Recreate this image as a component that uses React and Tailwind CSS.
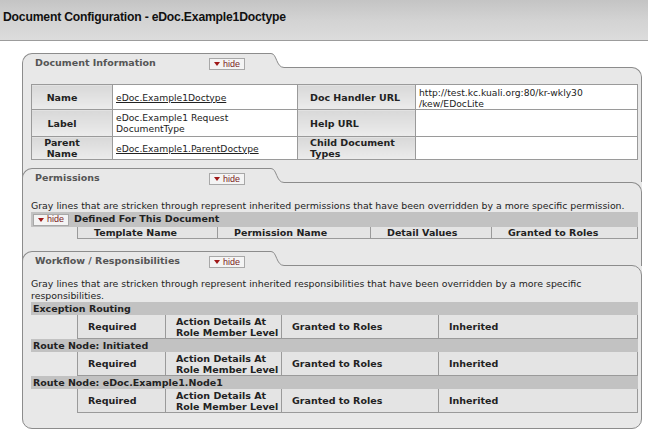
import React from 'react'

const VERDANA = "font-['DejaVu_Sans',Verdana,sans-serif]"

function HideBtn({ className = '' }) {
  return (
    <span className={`inline-flex items-center gap-[3px] h-[12px] px-[4px] border border-[#a8a8a8] bg-[#f4f4f4] text-[#7a1c1c] text-[9px] leading-none font-['Liberation_Sans',Arial,sans-serif] ${className}`}>
      <svg width="6" height="4" viewBox="0 0 6 4"><path d="M0 0H6L3 4Z" fill="#a01818" /></svg>
      hide
    </span>
  )
}

// tab with curved right edge; its bottom row covers the next box's top border
function Tab({ title, inset }) {
  return (
    <div className={`relative z-10 flex h-[15px] ${inset ? '-ml-px' : ''}`}>
      <div className="w-[246px] h-[15px] border-l border-t border-[#8c8c8c] rounded-tl-[10px] bg-[#e8e8e8] flex items-start pl-[12px]">
        <span className={`w-[174px] mt-[3px] leading-[11px] text-[9.5px] font-bold text-[#555] ${VERDANA}`}>{title}</span>
        <HideBtn className="mt-[4px]" />
      </div>
      <svg width="16" height="15" viewBox="0 0 16 15" className="block">
        <path d="M0 0H3C9 0 8 14 16 14V15H0Z" fill="#e8e8e8" />
        <path d="M0 0.5H3C9 0.5 8 14.5 16 14.5" fill="none" stroke="#8c8c8c" strokeWidth="1" />
      </svg>
    </div>
  )
}

const INFO = [
  { l1: 'Name', v1: 'eDoc.Example1Doctype', link1: true, l2: 'Doc Handler URL', v2: 'http://test.kc.kuali.org:80/kr-wkly30 /kew/EDocLite', h: 'h-[25px]' },
  { l1: 'Label', v1: 'eDoc.Example1 Request DocumentType', l2: 'Help URL', v2: '', h: 'h-[27px]' },
  { l1: 'Parent Name', v1: 'eDoc.Example1.ParentDoctype ', link1: true, l2: 'Child Document Types', v2: '', h: 'h-[20px]' },
]

const RESP = ['Exception Routing', 'Route Node: Initiated', 'Route Node: eDoc.Example1.Node1']

export default function App() {
  return (
    <div className={`w-[648px] h-[435px] bg-white overflow-hidden ${VERDANA} text-[#222]`}>
      {/* title band */}
      <div className="h-[41px] border-b border-[#9c9c9c] bg-gradient-to-b from-[#c4c4c4] via-[#d3d3d3] to-[#dcdcdc] flex items-start pl-[3px] pt-[8px]">
        <h1 className="text-[12.2px] font-bold text-[#111] font-['Liberation_Sans',Arial,sans-serif] tracking-[-0.2px]">
          Document Configuration - eDoc.Example1Doctype
        </h1>
      </div>

      <div className="ml-[22px] w-[620px] mt-[12px]">
        <Tab title="Document Information" />

        {/* Document Information */}
        <div className="-mt-px border-x border-t border-[#8c8c8c] rounded-tr-[10px] bg-[#e8e8e8] pt-[16px]">
          <table className="ml-[8px] w-[607px] border-collapse text-[9.2px]">
            <tbody>
              {INFO.map((r, i) => (
                <tr key={i} className={r.h}>
                  <th className="w-[81px] border border-[#9a9a9a] bg-gradient-to-b from-[#d8d8d8] to-[#ececec] text-[9.5px] font-bold text-center pr-[20px] leading-[11px]">{r.l1}</th>
                  <td className="w-[185px] border border-[#9a9a9a] bg-white px-[3px] leading-[11px] align-middle">
                    {r.link1 ? <span className="underline">{r.v1}</span> : <span className="block w-[130px]">{r.v1}</span>}
                  </td>
                  <th className="w-[118px] border border-[#9a9a9a] bg-gradient-to-b from-[#d8d8d8] to-[#ececec] text-[9.5px] font-bold text-left pl-[12px] leading-[11px]">{r.l2}</th>
                  <td className="border border-[#9a9a9a] bg-white px-[3px] leading-[11px] align-top pt-[2px]">
                    <span className="block w-[180px]">{r.v2}</span>
                  </td>
                </tr>
              ))}
            </tbody>
          </table>
          <div className="mt-[8px]">
            <Tab title="Permissions" inset />
          </div>
        </div>

        <div className="-mt-px bg-[#e8e8e8] rounded-b-[10px]">
          {/* Permissions */}
          <div className="border-x border-t border-[#8c8c8c] rounded-tr-[10px] bg-[#e8e8e8] pt-[17px]">
            <p className="pl-[8px] text-[9.4px] leading-[11px]">
              Gray lines that are stricken through represent inherited permissions that have been overridden by a more specific permission.
            </p>
            <div className="ml-[8px] w-[607px] mt-[1px]">
              <div className="h-[15px] bg-[#c2c2c2] flex items-center pl-[2px] gap-[5px]">
                <HideBtn />
                <span className="text-[9.5px] font-bold">Defined For This Document</span>
              </div>
              <div className="ml-[46px] flex h-[12px] border-l border-[#9a9a9a] text-[9.5px] font-bold leading-[11px]">
                {[['Template Name', 'w-[140px]'], ['Permission Name', 'w-[153px]'], ['Detail Values', 'w-[121px]'], ['Granted to Roles', 'flex-1']].map(([t, w]) => (
                  <div key={t} className={`${w} border-r border-b border-[#9a9a9a] bg-[#e4e4e4] pl-[16px]`}>{t}</div>
                ))}
              </div>
            </div>
            <div className="mt-[12px]">
              <Tab title="Workflow / Responsibilities" inset />
            </div>
          </div>

          {/* Workflow / Responsibilities */}
          <div className="-mt-px border-x border-t border-b border-[#8c8c8c] rounded-tr-[10px] rounded-b-[10px] bg-[#e8e8e8] pt-[12px] pb-[15px]">
            <p className="pl-[8px] w-[580px] text-[9.4px] leading-[12px]">
              Gray lines that are stricken through represent inherited responsibilities that have been overridden by a more specific responsibilities.
            </p>
            <div className="ml-[8px] w-[607px]">
              {RESP.map(name => (
                <div key={name}>
                  <div className="h-[13px] bg-[#c2c2c2] pl-[2px] text-[9.5px] font-bold leading-[13px]">{name}</div>
                  <div className="ml-[46px] flex h-[24px] border-l border-[#9a9a9a] text-[9.5px] font-bold leading-[11px]">
                    <div className="w-[88px] border-r border-b border-[#9a9a9a] bg-[#e4e4e4] pl-[10px] flex items-center">Required</div>
                    <div className="w-[116px] border-r border-b border-[#9a9a9a] bg-[#e4e4e4] pl-[10px] flex items-center">Action Details At<br />Role Member Level</div>
                    <div className="w-[157px] border-r border-b border-[#9a9a9a] bg-[#e4e4e4] pl-[10px] flex items-center">Granted to Roles</div>
                    <div className="flex-1 border-r border-b border-[#9a9a9a] bg-[#e4e4e4] pl-[10px] flex items-center">Inherited</div>
                  </div>
                </div>
              ))}
            </div>
          </div>
        </div>
      </div>
    </div>
  )
}
